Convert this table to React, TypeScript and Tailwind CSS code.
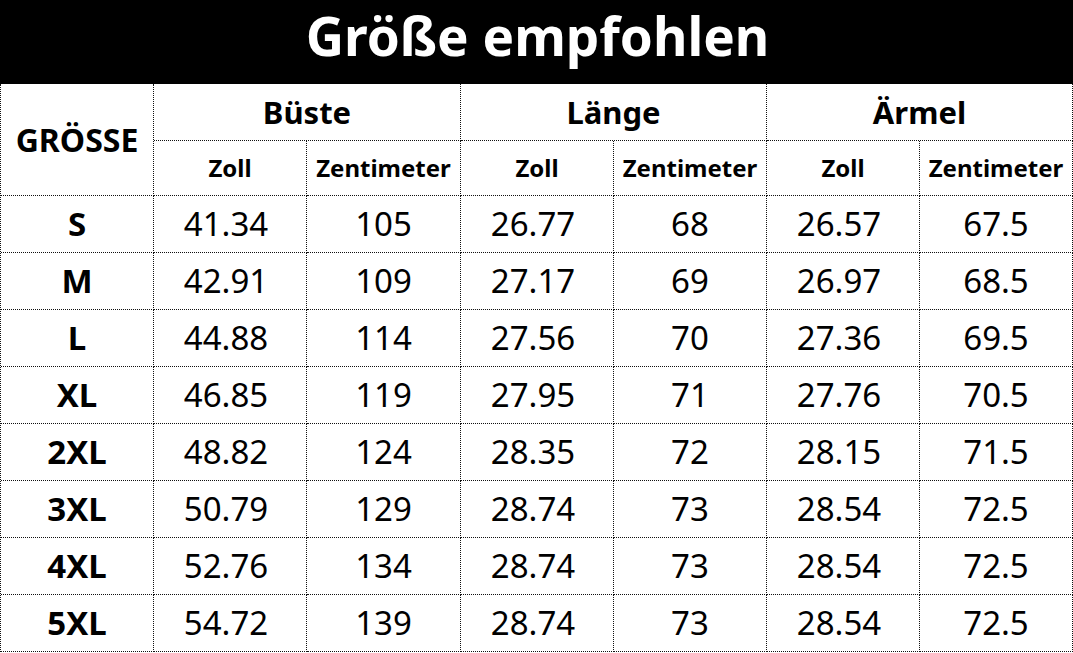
import React from "react";

const rows: [string, string, string, string, string, string, string][] = [
  ["S", "41.34", "105", "26.77", "68", "26.57", "67.5"],
  ["M", "42.91", "109", "27.17", "69", "26.97", "68.5"],
  ["L", "44.88", "114", "27.56", "70", "27.36", "69.5"],
  ["XL", "46.85", "119", "27.95", "71", "27.76", "70.5"],
  ["2XL", "48.82", "124", "28.35", "72", "28.15", "71.5"],
  ["3XL", "50.79", "129", "28.74", "73", "28.54", "72.5"],
  ["4XL", "52.76", "134", "28.74", "73", "28.54", "72.5"],
  ["5XL", "54.72", "139", "28.74", "73", "28.54", "72.5"],
];

const cell =
  "flex items-center justify-center border-r border-b border-dotted border-[#111] text-black";

export default function App() {
  return (
    <div
      className="w-[1073px] h-[653px] bg-white overflow-hidden"
      style={{ fontFamily: '"Noto Sans", "Open Sans", sans-serif' }}
    >
      <div className="h-[84px] bg-black flex justify-center items-start">
        <div className="text-white font-bold text-[53px] leading-[72px] pl-[2px]">
          Größe empfohlen
        </div>
      </div>
      <div className="grid grid-cols-[153px_153px_154px_153px_153px_153px_153px] grid-rows-[57px_55px_57px_57px_57px_57px_57px_57px_57px_57px] border-l border-dotted border-[#111] w-[1072px]">
        <div className={`${cell} row-span-2 font-bold text-[32px]`}>GRÖSSE</div>
        <div className={`${cell} col-span-2 font-bold text-[31px]`}>Büste</div>
        <div className={`${cell} col-span-2 font-bold text-[31px]`}>Länge</div>
        <div className={`${cell} col-span-2 font-bold text-[31px]`}>Ärmel</div>
        {["Zoll", "Zentimeter", "Zoll", "Zentimeter", "Zoll", "Zentimeter"].map((t, i) => (
          <div key={i} className={`${cell} font-bold text-[24px]`}>
            {t}
          </div>
        ))}
        {rows.map((r) =>
          r.map((v, j) => (
            <div
              key={r[0] + j}
              className={`${cell} text-[33px] ${
                j === 0 ? "font-bold" : j % 2 === 1 ? "font-normal pr-[8px]" : "font-normal"
              }`}
            >
              {v}
            </div>
          ))
        )}
      </div>
    </div>
  );
}
